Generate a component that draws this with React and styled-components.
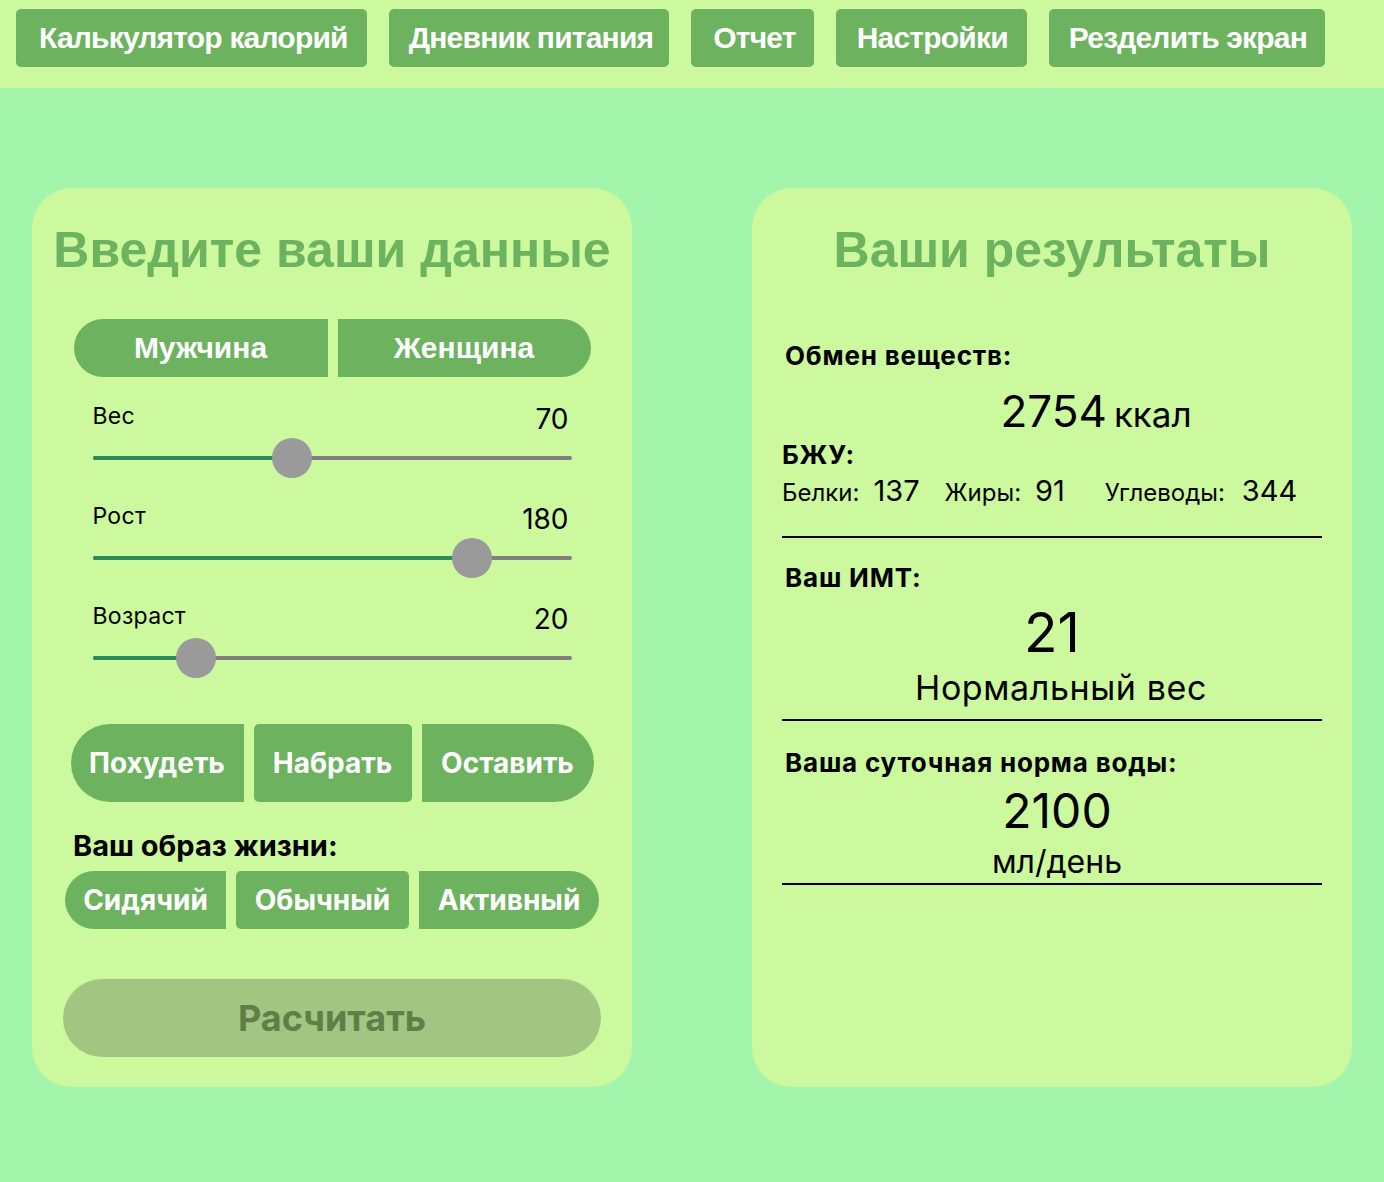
import React from 'react'
import styled, { createGlobalStyle } from 'styled-components'

const GlobalStyle = createGlobalStyle`
  html, body {
    margin: 0;
    padding: 0;
    background: #a3f5ab;
    font-family: Inter, "Noto Sans", sans-serif;
  }
`

const Page = styled.div`
  min-height: 1182px;
  background: #a3f5ab;
`

const Nav = styled.nav`
  height: 88px;
  background: #ccf89e;
  display: flex;
  align-items: flex-start;
  gap: 22px;
  padding: 9px 0 0 16px;
  box-sizing: border-box;
`

const NavButton = styled.button`
  height: 58px;
  padding: 0 ${p => p.$pr || 19}px 0 ${p => p.$pl || 23}px;
  border: 0;
  border-radius: 5px;
  background: #6db25e;
  color: #fff;
  font-family: "Liberation Sans", Arial, sans-serif;
  font-weight: 700;
  font-size: 30px;
  letter-spacing: -0.8px;
  cursor: pointer;
`

const Main = styled.main`
  display: flex;
  justify-content: space-between;
  padding: 100px 32px 0;
`

const Panel = styled.section`
  width: 600px;
  height: 899px;
  box-sizing: border-box;
  background: #ccf89e;
  border-radius: 40px;
  padding: ${p => p.$right ? '30px 30px' : '30px 0'};
  display: flex;
  flex-direction: column;
  align-items: ${p => p.$right ? 'stretch' : 'center'};
`

const Title = styled.h2`
  margin: 0;
  text-align: center;
  color: #6db25e;
  font-family: "Liberation Sans", Arial, sans-serif;
  font-weight: 700;
  font-size: 50px;
  line-height: 64px;
`

const Segmented = styled.div`
  display: flex;
  gap: 10px;
  margin-top: ${p => p.$mt}px;
`

const SegButton = styled.button`
  height: ${p => p.$h}px;
  width: ${p => p.$w}px;
  padding: 0;
  border: 0;
  background: #6db25e;
  color: #fff;
  font-family: ${p => p.$arial ? '"Liberation Sans", Arial, sans-serif' : 'Inter, "Noto Sans", sans-serif'};
  font-weight: 700;
  font-size: ${p => p.$fs}px;
  border-radius: ${p => p.$pos === 'first'
    ? `${p.$h / 2}px 0 0 ${p.$h / 2}px`
    : p.$pos === 'last'
      ? `0 ${p.$h / 2}px ${p.$h / 2}px 0`
      : '5px'};
  cursor: pointer;
`

const Sliders = styled.div`
  width: 479px;
  margin-top: 19px;
  display: flex;
  flex-direction: column;
`

const SliderBlock = styled.div`
  height: 100px;
  display: flex;
  flex-direction: column;
`

const SliderHead = styled.div`
  display: flex;
  justify-content: space-between;
  align-items: flex-end;
  height: 40px;
  color: #000;
`

const SliderLabel = styled.span`
  font-size: 23px;
  letter-spacing: 0.3px;
  line-height: 28px;
  padding-bottom: 6px;
`

const SliderValue = styled.span`
  font-size: 28px;
  line-height: 30px;
  padding-right: 3px;
  padding-bottom: 2px;
`

const Track = styled.div`
  position: relative;
  margin-top: 20px;
  height: 4px;
  border-radius: 2px;
  background: #808080;
`

const Fill = styled.div`
  height: 100%;
  border-radius: 2px;
  background: #2e8b57;
`

const Thumb = styled.div`
  position: absolute;
  top: -18px;
  width: 40px;
  height: 40px;
  margin-left: -20px;
  border-radius: 50%;
  background: #9a9a9a;
`

const Subhead = styled.div`
  align-self: flex-start;
  margin: ${p => p.$m};
  font-weight: 700;
  font-size: ${p => p.$fs || 26}px;
  letter-spacing: ${p => p.$ls ?? 0.8}px;
  line-height: 32px;
  color: #000;
`

const CalcButton = styled.button`
  margin-top: 50px;
  width: 538px;
  height: 78px;
  border: 0;
  border-radius: 39px;
  background: #a2c582;
  color: #5e7f48;
  font-family: Inter, "Noto Sans", sans-serif;
  font-weight: 700;
  font-size: 36px;
  cursor: pointer;
`

const Calories = styled.div`
  display: flex;
  justify-content: center;
  align-items: baseline;
  gap: 7px;
  margin: 14px 0 0 88px;
  line-height: 50px;
`

const Big = styled.span`
  font-size: ${p => p.$fs}px;
`

const Macros = styled.div`
  display: flex;
  align-items: baseline;
  font-size: 24px;
  line-height: 32px;
  margin-top: 4px;
`

const MacroValue = styled.span`
  font-size: 29px;
  margin: 0 ${p => p.$mr}px 0 ${p => p.$ml}px;
`

const Rule = styled.hr`
  margin: ${p => p.$m};
  border: 0;
  border-top: 2px solid #000;
`

const Center = styled.div`
  text-align: center;
  font-size: ${p => p.$fs}px;
  line-height: ${p => p.$lh}px;
  letter-spacing: ${p => p.$ls || 0}px;
  margin-top: ${p => p.$mt || 0}px;
  padding-left: ${p => p.$pl || 0}px;
`

const navItems = [
  { text: 'Калькулятор калорий' },
  { text: 'Дневник питания', pl: 20, pr: 16 },
  { text: 'Отчет', pl: 22, pr: 18 },
  { text: 'Настройки', pl: 21, pr: 19 },
  { text: 'Резделить экран', pl: 20, pr: 18 },
]

const sliders = [
  { label: 'Вес', value: 70, pct: 41 },
  { label: 'Рост', value: 180, pct: 82 },
  { label: 'Возраст', value: 20, pct: 19 },
]

const goals = [
  { text: 'Похудеть', w: 173 },
  { text: 'Набрать', w: 158 },
  { text: 'Оставить', w: 172 },
]

const styles = [
  { text: 'Сидячий', w: 161 },
  { text: 'Обычный', w: 173 },
  { text: 'Активный', w: 180 },
]

const pos = (i, n) => (i === 0 ? 'first' : i === n - 1 ? 'last' : 'mid')

// thumb centre inside the 479px track, thumb is 40px wide
const thumbX = pct => 20 + pct * 4.39

const App = () => {
  return (
    <Page>
      <GlobalStyle />
      <Nav>
        {navItems.map(n => (
          <NavButton key={n.text} $pl={n.pl} $pr={n.pr}>{n.text}</NavButton>
        ))}
      </Nav>

      <Main>
        <Panel>
          <Title>Введите ваши данные</Title>
          <Segmented $mt={37}>
            <SegButton $arial $pos="first" $h={58} $w={254} $fs={30}>Мужчина</SegButton>
            <SegButton $arial $pos="last" $h={58} $w={253} $fs={30}>Женщина</SegButton>
          </Segmented>

          <Sliders>
            {sliders.map(s => (
              <SliderBlock key={s.label}>
                <SliderHead>
                  <SliderLabel>{s.label}</SliderLabel>
                  <SliderValue>{s.value}</SliderValue>
                </SliderHead>
                <Track>
                  <Fill style={{ width: `${thumbX(s.pct)}px` }} />
                  <Thumb style={{ left: `${thumbX(s.pct)}px` }} />
                </Track>
              </SliderBlock>
            ))}
          </Sliders>

          <Segmented $mt={28}>
            {goals.map((g, i) => (
              <SegButton key={g.text} $pos={pos(i, goals.length)} $h={78} $w={g.w} $fs={28}>
                {g.text}
              </SegButton>
            ))}
          </Segmented>

          <Subhead $m="28px 0 0 41px" $fs={29} $ls={0}>Ваш образ жизни:</Subhead>
          <Segmented $mt={9}>
            {styles.map((g, i) => (
              <SegButton key={g.text} $pos={pos(i, styles.length)} $h={58} $w={g.w} $fs={28}>
                {g.text}
              </SegButton>
            ))}
          </Segmented>

          <CalcButton>Расчитать</CalcButton>
        </Panel>

        <Panel $right>
          <Title>Ваши результаты</Title>
          <Subhead $m="58px 0 0 3px">Обмен веществ:</Subhead>
          <Calories>
            <Big $fs={44}>2754</Big>
            <Big $fs={35}>ккал</Big>
          </Calories>
          <Subhead $m="0">БЖУ:</Subhead>
          <Macros>
            Белки:<MacroValue $ml={14} $mr={25}>137</MacroValue>
            Жиры:<MacroValue $ml={14} $mr={40}>91</MacroValue>
            Углеводы:<MacroValue $ml={17} $mr={0}>344</MacroValue>
          </Macros>
          <Rule $m="27px 0 0" />
          <Subhead $m="24px 0 0 3px">Ваш ИМТ:</Subhead>
          <Center $fs={55} $lh={60} $mt={8}>21</Center>
          <Center $fs={34} $lh={52} $ls={0.6} $pl={18}>Нормальный вес</Center>
          <Rule $m="5px 0 0" />
          <Subhead $m="26px 0 0 3px">Ваша суточная норма воды:</Subhead>
          <Center $fs={48} $lh={64} $pl={10}>2100</Center>
          <Center $fs={32} $lh={37} $pl={10}>мл/день</Center>
          <Rule $m="3px 0 0" />
        </Panel>
      </Main>
    </Page>
  )
}

export default App
